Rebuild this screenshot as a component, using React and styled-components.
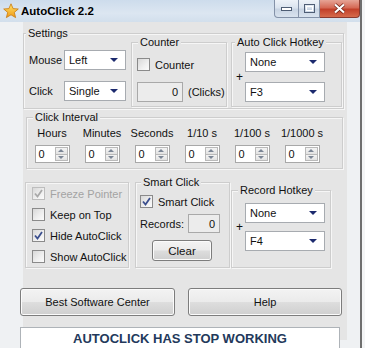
import React from 'react';
import styled, { createGlobalStyle } from 'styled-components';

const GlobalStyle = createGlobalStyle`
  html, body {
    margin: 0;
    padding: 0;
    background: #f4f5f6;
  }
  * { box-sizing: border-box; }
`;

const Window = styled.div`
  width: 362px;
  height: 348px;
  overflow: hidden;
  font-family: "Liberation Sans", Arial, sans-serif;
  font-size: 11px;
  color: #111;
  border-right: 2px solid #6f6f6f;
`;

const TitleBar = styled.div`
  height: 22px;
  display: flex;
  align-items: flex-start;
  background: linear-gradient(180deg, #cddcec 0%, #dce6f1 60%, #d2dfec 100%);
`;

const TitleIcon = styled.svg`
  width: 16px;
  height: 16px;
  flex-shrink: 0;
  margin: 3px 2px 0 3px;
`;

const TitleText = styled.div`
  font-weight: bold;
  font-size: 11.5px;
  line-height: 22px;
  color: #000;
`;

const WinButtons = styled.div`
  display: flex;
  margin-left: auto;
  margin-right: 0;
`;

const WinBtn = styled.div`
  width: ${p => p.$w}px;
  flex-shrink: 0;
  height: 18px;
  display: flex;
  align-items: center;
  justify-content: center;
  border: 1px solid ${p => (p.$close ? '#8a3a2f' : '#8492a8')};
  border-top: none;
  border-left: ${p => (p.$first ? '1px solid #8492a8' : 'none')};
  border-radius: ${p => (p.$first ? '0 0 0 4px' : p.$close ? '0 0 4px 0' : '0')};
  background: ${p =>
    p.$close
      ? 'linear-gradient(180deg, #e6a496 0%, #d56a56 45%, #c2402a 55%, #d66a4c 100%)'
      : 'linear-gradient(180deg, #edf2f8 0%, #dbe4ef 45%, #c8d4e3 55%, #d9e3ee 100%)'};
`;

const Body = styled.div`
  height: 326px;
  padding-left: 23px;
  background: #eff1f3;
`;

const Panel = styled.div`
  width: 324px;
  height: 318px;
  background: #e5e5e5;
  display: flex;
  flex-direction: column;
`;

const Group = styled.div`
  width: ${p => p.$w}px;
  height: ${p => p.$h}px;
  margin: ${p => p.$m || '0'};
  padding: ${p => p.$pad || '0'};
  border: 1px solid #cdcdcd;
  box-shadow: inset 1px 1px 0 #f6f6f6, 1px 1px 0 #f6f6f6;
  flex-shrink: 0;
`;

const Legend = styled.div`
  width: fit-content;
  margin: -8px 0 0 ${p => p.$ml || 0}px;
  padding: 0 2px;
  line-height: 14px;
  background: #e5e5e5;
`;

const Row = styled.div`
  display: flex;
  align-items: ${p => p.$align || 'center'};
  margin: ${p => p.$m || '0'};
  gap: ${p => p.$gap || 0}px;
`;

const Column = styled.div`
  display: flex;
  flex-direction: column;
  gap: ${p => p.$gap || 0}px;
  padding-top: ${p => p.$pt || 0}px;
  width: ${p => (p.$w ? `${p.$w}px` : 'auto')};
`;

const FieldLabel = styled.span`
  width: ${p => (p.$w ? `${p.$w}px` : 'auto')};
  line-height: 14px;
  white-space: nowrap;
  color: ${p => (p.$disabled ? '#a3a3a3' : '#111')};
`;

const Plus = styled.div`
  width: 9px;
  align-self: center;
  font-size: 12px;
  line-height: 12px;
`;

const Combo = styled.div`
  width: ${p => p.$w}px;
  height: 20px;
  display: flex;
  align-items: center;
  justify-content: space-between;
  padding: 0 7px 0 4px;
  background: #fff;
  border: 1px solid #a7abb0;
  line-height: 14px;
`;

const Arrow = styled.span`
  width: 0;
  height: 0;
  border-left: 4px solid transparent;
  border-right: 4px solid transparent;
  border-top: 4px solid #1c2a6e;
`;

const TextBox = styled.div`
  width: ${p => p.$w}px;
  height: ${p => p.$h}px;
  display: flex;
  align-items: center;
  justify-content: flex-end;
  padding-right: 4px;
  background: #ececec;
  border: 1px solid #a9a9a9;
  line-height: 14px;
`;

const CheckRow = styled.label`
  display: flex;
  align-items: center;
  gap: 5px;
  height: 15px;
  margin: ${p => p.$m || '0'};
`;

const Box = styled.span`
  width: 13px;
  height: 13px;
  display: flex;
  align-items: center;
  justify-content: center;
  border: 1px solid ${p => (p.$disabled ? '#bdbdbd' : '#8a8a8a')};
  background: linear-gradient(135deg, #d8d8d8 0%, #f0f0f0 60%, #fbfbfb 100%);
  flex-shrink: 0;
`;

const Check = ({ checked, disabled, children, m }) => (
  <CheckRow $m={m}>
    <Box $disabled={disabled}>
      {checked && (
        <svg width="9" height="9" viewBox="0 0 9 9">
          <path
            d="M1 4.5 L3.5 7.5 L8 1"
            fill="none"
            stroke={disabled ? '#a9a9a9' : '#3b4f8e'}
            strokeWidth="1.8"
          />
        </svg>
      )}
    </Box>
    <FieldLabel $disabled={disabled}>{children}</FieldLabel>
  </CheckRow>
);

const IntervalGrid = styled.div`
  display: grid;
  grid-template-columns: repeat(6, 50px);
  row-gap: 5px;
  margin-top: 2px;
  justify-items: center;
`;

const Spin = styled.div`
  width: 35px;
  height: 18px;
  display: flex;
  align-items: center;
  justify-content: space-between;
  padding: 1px 1px 1px 3px;
  background: #fff;
  border: 1px solid #a8a8a8;
  line-height: 14px;
`;

const SpinButtons = styled.div`
  width: 13px;
  height: 14px;
  display: flex;
  flex-direction: column;
`;

const SpinBtn = styled.div`
  flex: 1;
  display: flex;
  align-items: center;
  justify-content: center;
  border: 1px solid #b9b9b9;
  background: linear-gradient(180deg, #f4f4f4, #e2e2e2);
  & + & { border-top: none; }
`;

const Tri = styled.span`
  width: 0;
  height: 0;
  border-left: 3px solid transparent;
  border-right: 3px solid transparent;
  ${p =>
    p.$up ? 'border-bottom: 3px solid #7b8595;' : 'border-top: 3px solid #7b8595;'}
`;

const SpinBox = () => (
  <Spin>
    <span>0</span>
    <SpinButtons>
      <SpinBtn><Tri $up /></SpinBtn>
      <SpinBtn><Tri /></SpinBtn>
    </SpinButtons>
  </Spin>
);

const Button = styled.div`
  width: ${p => p.$w}px;
  height: ${p => p.$h}px;
  margin: ${p => p.$m || '0'};
  display: flex;
  align-items: center;
  justify-content: center;
  border: 1px solid #7d7d7d;
  border-radius: 3px;
  background: linear-gradient(180deg, #f3f3f3 0%, #ebebeb 48%, #dddddd 52%, #cfcfcf 100%);
  box-shadow: inset 0 0 0 1px #fbfbfb;
  font-size: ${p => p.$fs || 11}px;
  line-height: 14px;
`;

const ButtonRow = styled.div`
  display: flex;
  gap: 13px;
  margin: 20px 0 0 -3px;
`;

const Status = styled.div`
  width: 320px;
  height: 30px;
  margin: 11px 0 0 -3px;
  flex-shrink: 0;
  background: #fff;
  border: 1px solid #aeb3b8;
  text-align: center;
  padding-top: 3px;
  font-size: 13px;
  font-weight: bold;
  line-height: 16px;
  color: #23395b;
`;

const intervals = ['Hours', 'Minutes', 'Seconds', '1/10 s', '1/100 s', '1/1000 s'];

export default function App() {
  return (
    <>
      <GlobalStyle />
      <Window>
        <TitleBar>
          <TitleIcon viewBox="0 0 16 16">
            <defs>
              <linearGradient id="star" x1="0" y1="0" x2="0" y2="1">
                <stop offset="0" stopColor="#ffe36a" />
                <stop offset="1" stopColor="#f09a16" />
              </linearGradient>
            </defs>
            <path
              d="M8 0.8 L10.1 5.6 L15.3 6 L11.3 9.4 L12.6 14.6 L8 11.8 L3.4 14.6 L4.7 9.4 L0.7 6 L5.9 5.6 Z"
              fill="url(#star)"
              stroke="#c9780e"
              strokeWidth="0.8"
            />
          </TitleIcon>
          <TitleText>AutoClick 2.2</TitleText>
          <WinButtons>
            <WinBtn $w={25} $first>
              <svg width="11" height="5" viewBox="0 0 11 5">
                <rect x="0.5" y="1.5" width="10" height="3" fill="#fff" stroke="#4e5d74" />
              </svg>
            </WinBtn>
            <WinBtn $w={21}>
              <svg width="11" height="9" viewBox="0 0 11 9">
                <rect x="0.5" y="0.5" width="10" height="8" fill="none" stroke="#4e5d74" />
                <rect x="2.5" y="2.5" width="6" height="4" fill="none" stroke="#fff" />
              </svg>
            </WinBtn>
            <WinBtn $w={40} $close>
              <svg width="13" height="11" viewBox="0 0 13 11">
                <path d="M2 1.5 L11 9.5 M11 1.5 L2 9.5" stroke="#6a1f14" strokeWidth="3.6" />
                <path d="M2 1.5 L11 9.5 M11 1.5 L2 9.5" stroke="#fff" strokeWidth="2.2" />
              </svg>
            </WinBtn>
          </WinButtons>
        </TitleBar>

        <Body>
          <Panel>
            <Group $w={321} $h={76} $m="11px 0 0 0" $pad="0 0 0 5px">
              <Legend $ml={-3}>Settings</Legend>
              <Row $align="flex-start">
                <Column $w={97} $pt={10} $gap={11}>
                  <Row>
                    <FieldLabel $w={35}>Mouse</FieldLabel>
                    <Combo $w={62}>Left<Arrow /></Combo>
                  </Row>
                  <Row>
                    <FieldLabel $w={35}>Click</FieldLabel>
                    <Combo $w={62}>Single<Arrow /></Combo>
                  </Row>
                </Column>

                <Group $w={96} $h={65} $m="2px 0 0 5px" $pad="0 0 0 5px">
                  <Legend $ml={1}>Counter</Legend>
                  <Check m="8px 0 0 0">Counter</Check>
                  <Row $m="10px 0 0 0" $gap={5}>
                    <TextBox $w={46} $h={20}>0</TextBox>
                    <FieldLabel>(Clicks)</FieldLabel>
                  </Row>
                </Group>

                <Group $w={111} $h={65} $m="2px 0 0 4px" $pad="0 0 0 4px">
                  <Legend $ml={-1}>Auto Click Hotkey</Legend>
                  <Row $align="stretch" $m="3px 0 0 0">
                    <Plus>+</Plus>
                    <Column $gap={10}>
                      <Combo $w={80}>None<Arrow /></Combo>
                      <Combo $w={80}>F3<Arrow /></Combo>
                    </Column>
                  </Row>
                </Group>
              </Row>
            </Group>

            <Group $w={317} $h={52} $m="8px 0 0 3px">
              <Legend $ml={6}>Click Interval</Legend>
              <IntervalGrid>
                {intervals.map(label => (
                  <FieldLabel key={label}>{label}</FieldLabel>
                ))}
                {intervals.map(label => (
                  <SpinBox key={label} />
                ))}
              </IntervalGrid>
            </Group>

            <Row $align="flex-start" $m="13px 0 0 2px">
              <Group $w={104} $h={86} $pad="3px 0 0 6px">
                <Check checked disabled>Freeze Pointer</Check>
                <Check m="6px 0 0 0">Keep on Top</Check>
                <Check checked m="6px 0 0 0">Hide AutoClick</Check>
                <Check m="6px 0 0 0">Show AutoClick</Check>
              </Group>

              <Group $w={95} $h={86} $m="0 0 0 6px" $pad="0 0 0 4px">
                <Legend $ml={1}>Smart Click</Legend>
                <Check checked m="5px 0 0 0">Smart Click</Check>
                <Row $m="5px 0 0 0">
                  <FieldLabel $w={48}>Records:</FieldLabel>
                  <TextBox $w={32} $h={19}>0</TextBox>
                </Row>
                <Button $w={60} $h={21} $m="7px 0 0 12px" $fs={11.5}>Clear</Button>
              </Group>

              <Group $w={100} $h={78} $m="8px 0 0 1px" $pad="0 0 0 4px">
                <Legend $ml={2}>Record Hotkey</Legend>
                <Row $align="stretch" $m="6px 0 0 0">
                  <Plus>+</Plus>
                  <Column $gap={8}>
                    <Combo $w={80}>None<Arrow /></Combo>
                    <Combo $w={80}>F4<Arrow /></Combo>
                  </Column>
                </Row>
              </Group>
            </Row>

            <ButtonRow>
              <Button $w={155} $h={28}>Best Software Center</Button>
              <Button $w={154} $h={28}>Help</Button>
            </ButtonRow>

            <Status>AUTOCLICK HAS STOP WORKING</Status>
          </Panel>
        </Body>
      </Window>
    </>
  );
}
